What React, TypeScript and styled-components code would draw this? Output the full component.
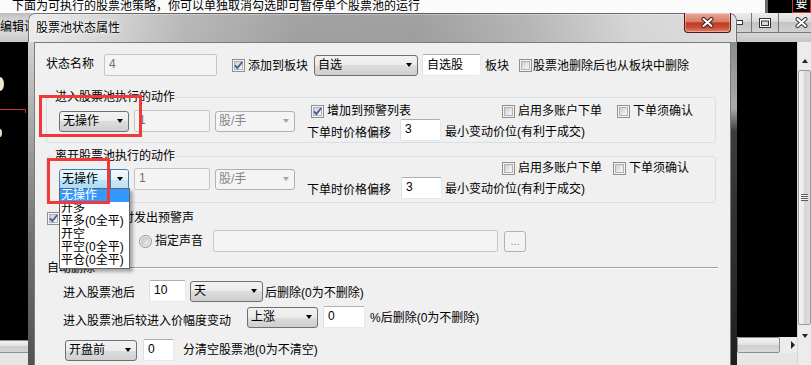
import React from "react";
import styled, { createGlobalStyle, css } from "styled-components";

const FONT = `"Liberation Sans", "Noto Sans CJK SC", sans-serif`;

const GlobalStyle = createGlobalStyle`
  * { box-sizing: border-box; }
  html, body { margin: 0; padding: 0; background: #000; }
  body { font-family: ${FONT}; font-size: 12px; line-height: 14px; color: #000; }
`;

const Desktop = styled.div`
  position: relative;
  width: 811px;
  height: 365px;
  overflow: hidden;
  background: #000;
`;

/* ---------- window behind the dialog ---------- */
const TopStrip = styled.div`
  display: flex;
  height: 13px;
  background: #fbfbfb;
  overflow: hidden;
`;
const TopText = styled.div`
  flex: 1;
  padding-left: 12px;
  line-height: 12px;
  white-space: nowrap;
  overflow: hidden;
`;
const TopCorner = styled.div`
  width: 46px;
  display: flex;
  justify-content: flex-end;
  background: #000;
  border-left: 3px solid #6a6a6a;
`;
const TopCornerCell = styled.div`
  width: 19px;
  border: 1px solid #e02a2a;
  border-top: none;
  color: #fff;
  line-height: 8px;
  text-align: center;
  overflow: hidden;
`;

const BgTitle = styled.div`
  display: flex;
  height: 29px;
  background: linear-gradient(#bcbcbc, #d6d6d6 25%, #dcdcdc 60%, #c6c6c6);
`;
const BgTitleText = styled.span`
  padding-top: 7px;
  white-space: nowrap;
`;
const CaptionButtons = styled.div`
  display: flex;
  height: 20px;
  margin-left: auto;
  margin-right: -14px;
`;
const CaptionButton = styled.div<{ $w: number }>`
  width: ${(p) => p.$w}px;
  display: flex;
  align-items: center;
  justify-content: center;
  border: 1px solid #767676;
  border-top: none;
  background: linear-gradient(#ececec, #d9d9d9 50%, #c4c4c4 50%, #d2d2d2);
  & + & {
    border-left: none;
  }
`;

const BgBody = styled.div`
  display: flex;
  height: 323px;
`;
const LeftPane = styled.div`
  width: 28px;
  display: flex;
  flex-direction: column;
`;
const ChartArea = styled.div`
  flex: 1;
  background: #000;
`;
const HScrollTrack = styled.div`
  height: 16px;
  border-top: 1px solid #8f8f8f;
  border-bottom: 1px solid #8f8f8f;
  background: linear-gradient(#f2f2f2, #e0e0e0 50%, #cdcdcd 50%, #d4d4d4);
`;
const PaneFoot = styled.div`
  flex: none;
  height: 12px;
  background: #e6e6e6;
`;
const MiddlePane = styled.div`
  flex: 1;
  background: #000;
`;
const RightPane = styled.div`
  width: 74px;
  display: flex;
`;
const RightMain = styled.div`
  flex: 1;
  display: flex;
  flex-direction: column;
`;
const BlackView = styled.div`
  flex: 1;
  background: #000;
`;
const HScrollRow = styled.div`
  height: 16px;
  display: flex;
  background: #ececec;
`;
const HThumb = styled.div`
  width: 43px;
  border: 1px solid #8e8e8e;
  border-radius: 2px;
  background: linear-gradient(#f4f4f4, #e2e2e2 50%, #cfcfcf 50%, #d9d9d9);
`;
const ArrowCell = styled.div<{ $h?: number; $pad?: string }>`
  flex: ${(p) => (p.$h ? "none" : 1)};
  height: ${(p) => (p.$h ? `${p.$h}px` : "auto")};
  display: flex;
  align-items: center;
  justify-content: center;
  padding: ${(p) => p.$pad ?? "0"};
`;
const VScroll = styled.div`
  width: 14px;
  display: flex;
  flex-direction: column;
  background: #ececec;
  border-left: 1px solid #d6d6d6;
`;
const VThumb = styled.div`
  height: 255px;
  margin: 2px 0 0 0;
  border: 1px solid #9a9a9a;
  border-radius: 2px;
  background: linear-gradient(90deg, #f6f6f6, #e6e6e6 50%, #d6d6d6 50%, #dcdcdc);
  display: flex;
  align-items: center;
  justify-content: center;
`;
const Grip = styled.span`
  width: 7px;
  height: 7px;
  background: repeating-linear-gradient(#5c5c5c 0 1px, #f4f4f4 1px 2px);
`;
const Tri = styled.span<{ $dir: "up" | "down" | "right"; $color?: string }>`
  width: 0;
  height: 0;
  border-style: solid;
  ${(p) =>
    p.$dir === "up" &&
    css`
      border-width: 0 3.5px 4px;
      border-color: transparent transparent ${p.$color ?? "#222"};
    `}
  ${(p) =>
    p.$dir === "down" &&
    css`
      border-width: 4px 3.5px 0;
      border-color: ${p.$color ?? "#222"} transparent transparent;
    `}
  ${(p) =>
    p.$dir === "right" &&
    css`
      border-width: 4px 0 4px 4px;
      border-color: transparent transparent transparent ${p.$color ?? "#222"};
    `}
`;

/* ---------- dialog frame ---------- */
const Dialog = styled.div`
  position: absolute;
  left: 28px;
  top: 13px;
  width: 709px;
  height: 360px;
  display: flex;
  flex-direction: column;
  border-radius: 7px 7px 0 0;
  overflow: hidden;
  background: linear-gradient(rgba(255, 255, 255, 0.18), rgba(255, 255, 255, 0) 45%, rgba(255, 255, 255, 0.15)),
    linear-gradient(90deg, #e8e8e8 0%, #d4d4d4 9%, #aaaaaa 22%, #8f8f8f 38%, #8d8d8d 55%, #a6a6a6 70%, #cdcdcd 85%, #d8d8d8 100%);
  box-shadow: inset 0 0 0 1px rgba(30, 30, 30, 0.6), inset 0 0 0 2px rgba(255, 255, 255, 0.3);
`;
const TitleBar = styled.div`
  flex: none;
  height: 29px;
  display: flex;
  align-items: center;
  padding-left: 8px;
`;
const TitleText = styled.span`
  white-space: nowrap;
  text-shadow: 0 0 6px #fff, 0 0 3px #fff;
`;
const CloseButton = styled.div`
  align-self: flex-start;
  margin-left: auto;
  margin-right: 6px;
  width: 47px;
  height: 20px;
  display: flex;
  align-items: center;
  justify-content: center;
  border: 1px solid #4c1a14;
  border-top: none;
  border-radius: 0 0 4px 4px;
  background: linear-gradient(#eaa99a, #d77d68 45%, #c23a20 52%, #c94c32 75%, #e2826c);
  box-shadow: inset 0 0 0 1px rgba(255, 255, 255, 0.35);
`;
const FrameBody = styled.div`
  flex: 1;
  display: flex;
  min-height: 0;
`;
const SideFrame = styled.div<{ $side: "left" | "right" }>`
  width: 6px;
  flex: none;
  background: ${(p) =>
    p.$side === "left"
      ? "linear-gradient(#d2d2d2, #a8a8a8 25%, #707070 60%, #505050)"
      : "linear-gradient(#8c8c8c, #ababab 20%, #3c3c3c 27%, #1e1e1e)"};
`;
const Client = styled.div`
  flex: 1;
  display: flex;
  flex-direction: column;
  align-items: flex-start;
  padding: 11px 0 0 11px;
  background: #f0f0f0;
  border: 1px solid #7b7b7b;
  border-bottom: none;
  overflow: hidden;
`;

/* ---------- controls ---------- */
const Row = styled.div<{ $mt?: number }>`
  display: flex;
  align-items: center;
  flex: none;
  margin-top: ${(p) => p.$mt ?? 0}px;
`;
const Text = styled.span<{ $ml?: number; $dy?: number }>`
  flex: none;
  white-space: nowrap;
  line-height: 14px;
  margin-left: ${(p) => p.$ml ?? 0}px;
  margin-top: ${(p) => (p.$dy ?? 0) * 2}px;
`;
const IconSvg = styled.svg<{ $ml?: number }>`
  flex: none;
  display: block;
  margin-left: ${(p) => p.$ml ?? 0}px;
`;
const Edit = styled.input<{ $w: number; $ml?: number; $off?: boolean }>`
  flex: none;
  width: ${(p) => p.$w}px;
  height: 22px;
  margin: 0 0 0 ${(p) => p.$ml ?? 0}px;
  padding: 0 2px 3px 4px;
  font: 12px ${FONT};
  color: #000;
  background: #fff;
  outline: none;
  border: 1px solid #e3e9ef;
  border-top-color: #abadb3;
  border-left-color: #dbdfe6;
  border-radius: 2px;
  ${(p) =>
    p.$off &&
    css`
      background: #f4f4f4;
      border-color: #c6c6c6;
      color: #707070;
    `}
`;
const ComboBox = styled.div<{ $w: number; $ml?: number; $off?: boolean }>`
  flex: none;
  display: flex;
  align-items: center;
  width: ${(p) => p.$w}px;
  height: 21px;
  margin-left: ${(p) => p.$ml ?? 0}px;
  padding: 0 5px 0 3px;
  border: 1px solid #707070;
  border-radius: 3px;
  background: linear-gradient(#f2f2f2, #ebebeb 50%, #dddddd 50%, #cfcfcf);
  ${(p) =>
    p.$off &&
    css`
      border-color: #adb2b5;
      background: #f4f4f4;
      color: #868686;
    `}
`;
const ComboValue = styled.span`
  flex: 1;
  white-space: nowrap;
  overflow: hidden;
  line-height: 14px;
`;
const FocusCombo = styled.div<{ $w: number }>`
  flex: none;
  display: flex;
  width: ${(p) => p.$w}px;
  height: 21px;
  border: 1px solid #3c7fb1;
  border-radius: 3px;
  overflow: hidden;
`;
const FocusField = styled.span`
  flex: 1;
  display: flex;
  align-items: center;
  padding-left: 2px;
  white-space: nowrap;
  border-right: 1px solid #3c7fb1;
  background: linear-gradient(#eaf6fd, #d9f0fc 50%, #bee6fd 50%, #a7d9f5);
`;
const FocusButton = styled.span`
  width: 17px;
  display: flex;
  align-items: center;
  justify-content: center;
  background: linear-gradient(#f3fafe, #e1f2fb 50%, #cce9f8 50%, #badef2);
`;
const DotButton = styled.div<{ $ml?: number }>`
  flex: none;
  width: 22px;
  height: 21px;
  margin-left: ${(p) => p.$ml ?? 0}px;
  display: flex;
  align-items: center;
  justify-content: center;
  border: 1px solid #adb2b5;
  border-radius: 3px;
  background: #f4f4f4;
  color: #8a8a8a;
  font-size: 11px;
`;

const Group = styled.fieldset<{ $mt: number; $pb: number }>`
  flex: none;
  width: 670px;
  min-width: 0;
  margin: ${(p) => p.$mt}px 0 0;
  padding: 0 0 ${(p) => p.$pb}px 6px;
  border: 1px solid #d5dfe5;
  border-radius: 3px;
`;
const Legend = styled.legend`
  padding: 0 2px;
  line-height: 14px;
`;
const GroupBody = styled.div`
  display: flex;
  align-items: flex-start;
  padding-left: 6px;
`;
const LeftControls = styled.div<{ $mt: number }>`
  display: flex;
  align-items: center;
  margin-top: ${(p) => p.$mt}px;
`;
const RightControls = styled.div`
  display: flex;
  flex-direction: column;
  margin-left: 12px;
`;

const Separator = styled.div<{ $mt: number }>`
  flex: none;
  display: flex;
  align-items: center;
  width: 672px;
  margin-top: ${(p) => p.$mt}px;
`;
const SepLine = styled.span`
  flex: 1;
  margin-left: 4px;
  border-top: 1px solid #a0a0a0;
  border-bottom: 1px solid #fff;
`;

/* ---------- overlays ---------- */
const DropList = styled.ul`
  position: absolute;
  left: 59px;
  top: 188px;
  width: 71px;
  margin: 0;
  padding: 0 0 1px;
  list-style: none;
  background: #fff;
  border: 1px solid #646464;
  box-shadow: 3px 3px 3px rgba(0, 0, 0, 0.3);
`;
const DropItem = styled.li<{ $active?: boolean }>`
  height: 13px;
  line-height: 13px;
  padding-left: 1px;
  white-space: nowrap;
  ${(p) =>
    p.$active &&
    css`
      background: #3399ff;
      color: #fff;
    `}
`;
const RedMark = styled.div<{ $x: number; $y: number; $w: number; $h: number }>`
  position: absolute;
  left: ${(p) => p.$x}px;
  top: ${(p) => p.$y}px;
  width: ${(p) => p.$w}px;
  height: ${(p) => p.$h}px;
  border: 3px solid #ee3a3a;
  pointer-events: none;
`;

/* ---------- small drawings ---------- */
const CheckBox = ({ checked, ml }: { checked?: boolean; ml?: number }) => (
  <IconSvg $ml={ml} width="13" height="13" viewBox="0 0 13 13">
    <defs>
      <linearGradient id="cbFill" x1="0" y1="0" x2="1" y2="1">
        <stop offset="0" stopColor="#c4c8ce" />
        <stop offset="0.6" stopColor="#e8eaed" />
        <stop offset="1" stopColor="#f8f8f8" />
      </linearGradient>
    </defs>
    <rect x="0.5" y="0.5" width="12" height="12" fill="#f4f4f4" stroke="#8e8f8f" />
    <rect x="2.5" y="2.5" width="8" height="8" fill="url(#cbFill)" stroke="#aeb3b9" />
    {checked && (
      <path d="M3 6.3 L5.4 9 L10.2 3" fill="none" stroke="#4a5f90" strokeWidth="1.9" />
    )}
  </IconSvg>
);

const RadioIcon = ({ ml }: { ml?: number }) => (
  <IconSvg $ml={ml} width="13" height="13" viewBox="0 0 13 13">
    <defs>
      <linearGradient id="rbFill" x1="0" y1="0" x2="1" y2="1">
        <stop offset="0" stopColor="#bfc3c9" />
        <stop offset="1" stopColor="#f6f6f6" />
      </linearGradient>
    </defs>
    <circle cx="6.5" cy="6.5" r="6" fill="#f4f4f4" stroke="#8e8f8f" />
    <circle cx="6.5" cy="6.5" r="4" fill="url(#rbFill)" stroke="#b4b9be" strokeWidth="0.8" />
  </IconSvg>
);

const Combo = ({ w, ml, off, value }: { w: number; ml?: number; off?: boolean; value: string }) => (
  <ComboBox $w={w} $ml={ml} $off={off}>
    <ComboValue>{value}</ComboValue>
    <Tri $dir="down" $color={off ? "#a4a4a4" : "#000"} />
  </ComboBox>
);

const CloseGlyph = ({ dark, light }: { dark: string; light: string }) => (
  <svg width="13" height="11" viewBox="0 0 13 11">
    <path d="M2.5 2 L10.5 9 M10.5 2 L2.5 9" stroke={dark} strokeWidth="4" strokeLinecap="round" />
    <path d="M2.5 2 L10.5 9 M10.5 2 L2.5 9" stroke={light} strokeWidth="2.1" strokeLinecap="round" />
  </svg>
);

export default function App() {
  return (
    <>
      <GlobalStyle />
      <Desktop>
        <TopStrip>
          <TopText>下面为可执行的股票池策略，你可以单独取消勾选即可暂停单个股票池的运行</TopText>
          <TopCorner>
            <TopCornerCell>要</TopCornerCell>
          </TopCorner>
        </TopStrip>
        <BgTitle>
          <BgTitleText>编辑设置</BgTitleText>
          <CaptionButtons>
            <CaptionButton $w={27}>
              <svg width="9" height="5" viewBox="0 0 9 5">
                <rect x="0.5" y="0.5" width="8" height="4" fill="#fff" stroke="#333" />
              </svg>
            </CaptionButton>
            <CaptionButton $w={27}>
              <svg width="12" height="10" viewBox="0 0 12 10">
                <rect x="0.5" y="0.5" width="11" height="9" fill="#fff" stroke="#333" />
                <rect x="2.5" y="3" width="7" height="4.5" fill="#d8d8d8" stroke="#333" />
              </svg>
            </CaptionButton>
            <CaptionButton $w={46}>
              <CloseGlyph dark="#333" light="#fff" />
            </CaptionButton>
          </CaptionButtons>
        </BgTitle>
        <BgBody>
          <LeftPane>
            <ChartArea>
              <svg width="28" height="295" viewBox="0 0 28 295">
                <polyline points="0,67.5 25.5,67.5 25.5,71" fill="none" stroke="#d42a2a" strokeWidth="1" />
                <ellipse cx="0" cy="42" rx="4" ry="7" fill="#efe6cf" />
                <ellipse cx="0" cy="91" rx="2" ry="4" fill="#e8dcc0" />
              </svg>
            </ChartArea>
            <HScrollTrack />
            <PaneFoot />
          </LeftPane>
          <MiddlePane />
          <RightPane>
            <RightMain>
              <BlackView />
              <HScrollRow>
                <HThumb />
                <ArrowCell $pad="0 0 0 8px">
                  <Tri $dir="right" />
                </ArrowCell>
              </HScrollRow>
              <PaneFoot />
            </RightMain>
            <VScroll>
              <ArrowCell $h={26} $pad="12px 0 0 0">
                <Tri $dir="up" />
              </ArrowCell>
              <VThumb>
                <Grip />
              </VThumb>
              <ArrowCell $h={22}>
                <Tri $dir="down" />
              </ArrowCell>
            </VScroll>
          </RightPane>
        </BgBody>

        <Dialog>
          <TitleBar>
            <TitleText>股票池状态属性</TitleText>
            <CloseButton>
              <CloseGlyph dark="#3b1a14" light="#fff" />
            </CloseButton>
          </TitleBar>
          <FrameBody>
            <SideFrame $side="left" />
            <Client>
              <Row>
                <Text $dy={-1.5}>状态名称</Text>
                <Edit $w={113} $ml={10} $off readOnly value="4" />
                <CheckBox checked ml={15} />
                <Text $ml={3} $dy={1}>添加到板块</Text>
                <Combo w={104} ml={6} value="自选" />
                <Edit $w={59} $ml={4} readOnly value="自选股" />
                <Text $ml={4} $dy={1}>板块</Text>
                <CheckBox ml={10} />
                <Text $ml={1} $dy={1}>股票池删除后也从板块中删除</Text>
              </Row>

              <Group $mt={14} $pb={1}>
                <Legend>进入股票池执行的动作</Legend>
                <GroupBody>
                  <LeftControls $mt={6}>
                    <Combo w={70} value="无操作" />
                    <Edit $w={76} $ml={5} $off readOnly value="1" />
                    <Combo w={80} ml={5} off value="股/手" />
                  </LeftControls>
                  <RightControls>
                    <Row>
                      <CheckBox checked ml={4} />
                      <Text $ml={3}>增加到预警列表</Text>
                      <CheckBox ml={91} />
                      <Text $ml={3}>启用多账户下单</Text>
                      <CheckBox ml={15} />
                      <Text $ml={3}>下单须确认</Text>
                    </Row>
                    <Row $mt={1}>
                      <Text $dy={2.5}>下单时价格偏移</Text>
                      <Edit $w={41} $ml={9} readOnly value="3" />
                      <Text $ml={4} $dy={1.5}>最小变动价位(有利于成交)</Text>
                    </Row>
                  </RightControls>
                </GroupBody>
              </Group>

              <Group $mt={6} $pb={3}>
                <Legend>离开股票池执行的动作</Legend>
                <GroupBody>
                  <LeftControls $mt={5}>
                    <FocusCombo $w={70}>
                      <FocusField>无操作</FocusField>
                      <FocusButton>
                        <Tri $dir="down" $color="#000" />
                      </FocusButton>
                    </FocusCombo>
                    <Edit $w={76} $ml={5} $off readOnly value="1" />
                    <Combo w={80} ml={5} off value="股/手" />
                  </LeftControls>
                  <RightControls>
                    <Row $mt={-2}>
                      <CheckBox ml={195} />
                      <Text $ml={3}>启用多账户下单</Text>
                      <CheckBox ml={11} />
                      <Text $ml={3}>下单须确认</Text>
                    </Row>
                    <Row $mt={2}>
                      <Text $dy={2}>下单时价格偏移</Text>
                      <Edit $w={41} $ml={10} readOnly value="3" />
                      <Text $ml={3} $dy={0.5}>最小变动价位(有利于成交)</Text>
                    </Row>
                  </RightControls>
                </GroupBody>
              </Group>

              <Row $mt={8}>
                <CheckBox checked ml={1} />
                <Text $ml={2}>进入股票池时发出预警声</Text>
              </Row>
              <Row $mt={5}>
                <RadioIcon ml={17} />
                <Text $ml={3}>默认声音</Text>
                <RadioIcon ml={12} />
                <Text $ml={3}>指定声音</Text>
                <Edit $w={285} $ml={10} $off readOnly value="" />
                <DotButton $ml={6}>...</DotButton>
              </Row>

              <Separator $mt={9}>
                <Text $ml={1}>自动删除</Text>
                <SepLine />
              </Separator>

              <Row $mt={5}>
                <Text $ml={17} $dy={2}>进入股票池后</Text>
                <Edit $w={37} $ml={14} readOnly value="10" />
                <Combo w={73} ml={4} value="天" />
                <Text $ml={2} $dy={1.5}>后删除(0为不删除)</Text>
              </Row>
              <Row $mt={4}>
                <Text $ml={17} $dy={4}>进入股票池后较进入价幅度变动</Text>
                <Combo w={71} ml={16} value="上涨" />
                <Edit $w={42} $ml={5} readOnly value="0" />
                <Text $ml={5} $dy={1}>%后删除(0为不删除)</Text>
              </Row>
              <Row $mt={11}>
                <Combo w={72} ml={19} value="开盘前" />
                <Edit $w={31} $ml={6} readOnly value="0" />
                <Text $ml={9}>分清空股票池(0为不清空)</Text>
              </Row>
            </Client>
            <SideFrame $side="right" />
          </FrameBody>
        </Dialog>

        <DropList>
          <DropItem $active>无操作</DropItem>
          <DropItem>开多</DropItem>
          <DropItem>平多(0全平)</DropItem>
          <DropItem>开空</DropItem>
          <DropItem>平空(0全平)</DropItem>
          <DropItem>平仓(0全平)</DropItem>
        </DropList>
        <RedMark $x={39} $y={95} $w={103} $h={42} />
        <RedMark $x={47} $y={158} $w={63} $h={46} />
      </Desktop>
    </>
  );
}
